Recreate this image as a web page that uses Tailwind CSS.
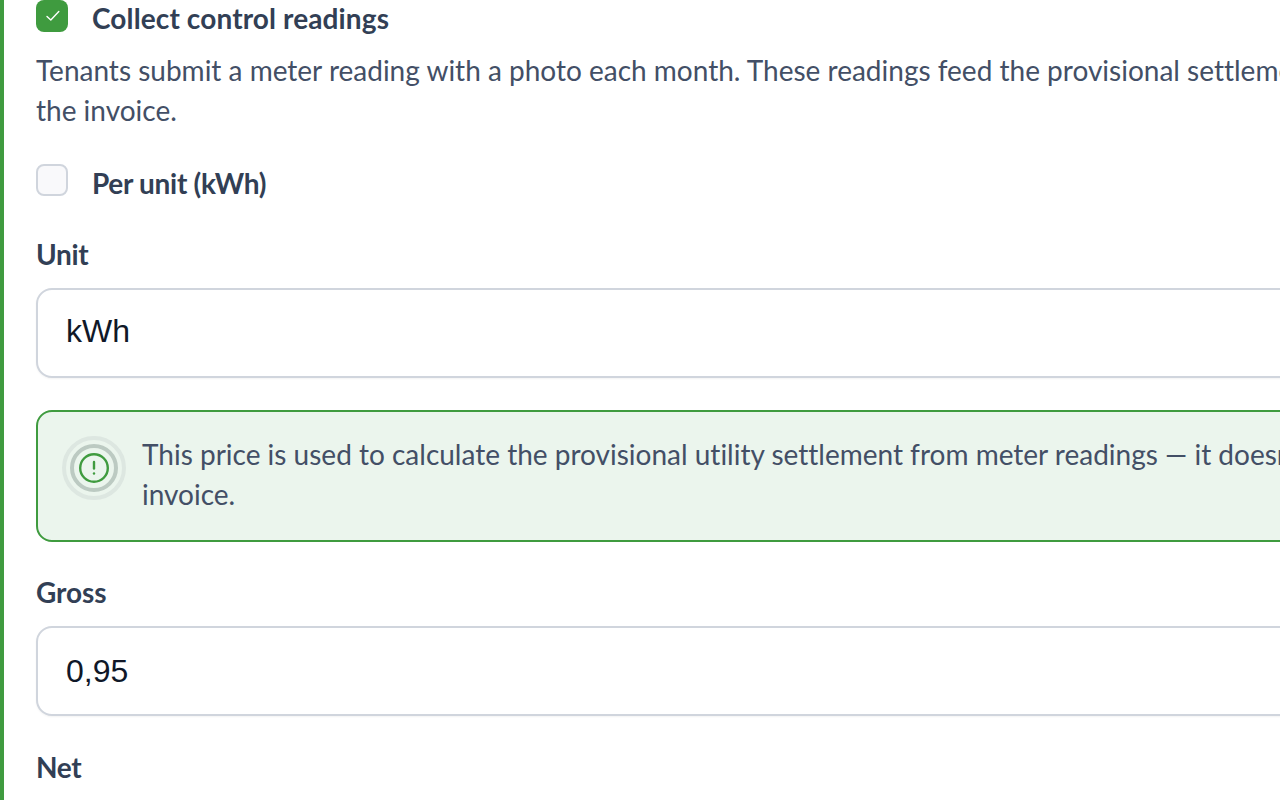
<!DOCTYPE html>
<html lang="en">
<head>
    <meta charset="UTF-8">
    <meta name="viewport" content="width=device-width, initial-scale=1.0">
    <title>Control readings</title>
    <script src="https://cdn.jsdelivr.net/npm/@tailwindcss/browser@4"></script>
</head>
<body class="h-[800px] overflow-hidden bg-white font-['Lato',sans-serif] [font-variant-ligatures:none]">
    <div class="h-[800px] w-[1600px] border-l-4 border-[#3f9b3f] pl-8 text-[28px] leading-10 text-[#434f66]">
        <!-- Collect control readings -->
        <label class="flex h-8 items-start gap-6">
            <span class="flex size-8 shrink-0 items-center justify-center rounded-lg bg-[#3f9b3f]">
                <svg class="ml-0.5 size-4" viewBox="0 0 16 16" fill="none" stroke="white" stroke-width="1.4" stroke-linecap="round" stroke-linejoin="round"><path d="M2 8.5l3.8 3.5 8-8.5"/></svg>
            </span>
            <span class="-mt-0.5 font-bold tracking-[0.12px] text-[#323f55]">Collect control readings</span>
        </label>
        <p class="mt-[18px] whitespace-nowrap">Tenants submit a meter reading with a photo each month. These readings feed the provisional settlement until<br>the invoice.</p>

        <!-- Per unit -->
        <label class="mt-[34px] flex h-8 items-start gap-6">
            <span class="size-8 shrink-0 rounded-lg border-2 border-[#d0d5dd] bg-[#f9f9fb]"></span>
            <span class="-mt-px font-bold tracking-[-0.3px] text-[#323f55]">Per unit (kWh)</span>
        </label>

        <!-- Unit -->
        <label class="mt-[38px] block font-bold leading-10 tracking-[-0.3px] text-[#323f55]">Unit</label>
        <div class="mt-[14px] flex h-[90px] items-center rounded-2xl border-2 border-[#d0d5dd] bg-white pb-1 pl-7 font-['Liberation_Sans',sans-serif] text-[32px] text-[#101828] shadow-xs">kWh</div>

        <!-- Alert -->
        <div class="mt-8 flex h-[132px] gap-4 rounded-2xl border-2 border-[#3f9b3f] bg-[#ebf5ed] py-[22px] pl-6">
            <div class="mt-0.5 flex size-16 shrink-0 items-center justify-center rounded-full border-4 border-[#dde7e1]">
                <div class="flex size-12 items-center justify-center rounded-full border-4 border-[#bccac2]">
                    <svg class="size-[30px] shrink-0" viewBox="0 0 30 30" fill="none" stroke="#3f9b3f" stroke-width="2.4" stroke-linecap="round"><circle cx="15" cy="15" r="13.8"/><path d="M15 9v6.5"/><path d="M15 20.5h.01"/></svg>
                </div>
            </div>
            <p class="whitespace-nowrap">This price is used to calculate the provisional utility settlement from meter readings — it doesn't change the<br>invoice.</p>
        </div>

        <!-- Gross -->
        <label class="mt-[30px] block font-bold tracking-[-0.1px] text-[#323f55]">Gross</label>
        <div class="mt-[14px] flex h-[90px] items-center rounded-2xl border-2 border-[#d0d5dd] bg-white pl-7 font-['Liberation_Sans',sans-serif] text-[32px] text-[#101828] shadow-xs">0,95</div>

        <!-- Net -->
        <label class="mt-[31px] block font-bold tracking-[-0.3px] text-[#323f55]">Net</label>
    </div>
</body>
</html>
